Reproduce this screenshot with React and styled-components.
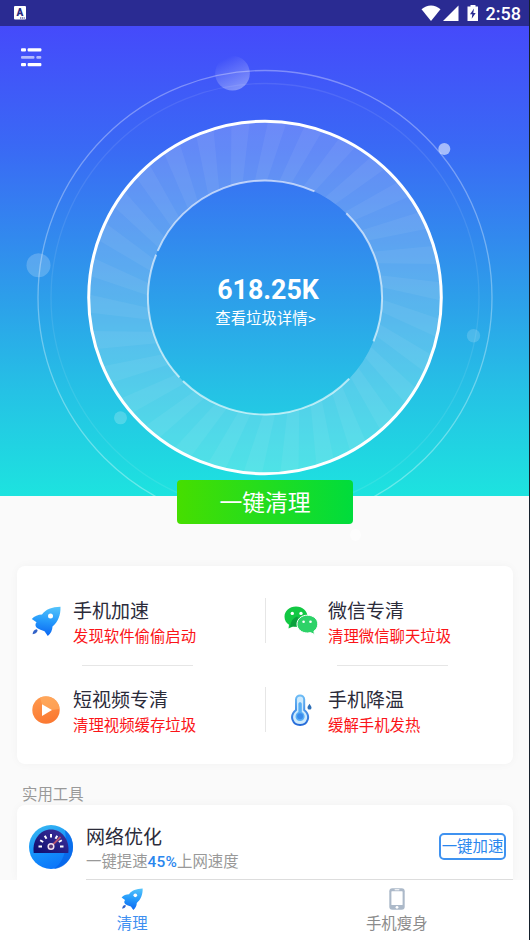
import React from 'react';
import styled, { createGlobalStyle } from 'styled-components';

const CX = 265;
const CY = 297.5;

const point = (radius, deg) => {
    const a = (deg * Math.PI) / 180;
    return `${(CX + radius * Math.sin(a)).toFixed(2)} ${(CY - radius * Math.cos(a)).toFixed(2)}`;
};

const arc = (radius, from, to) =>
    `M${point(radius, from)} A${radius} ${radius} 0 0 1 ${point(radius, to)}`;

// each ray leans a few degrees backwards towards the inner circle
const RAY_COUNT = 30;
const rays = Array.from({ length: RAY_COUNT }, (_, i) => {
    const step = 360 / RAY_COUNT;
    const a = i * step + 1;
    return `M${point(176, a)} A176 176 0 0 1 ${point(176, a + step / 2)} L${point(117, a + step / 2 - 6)} L${point(117, a - 6)}Z`;
}).join(' ');

const innerArcs = [[293.5, 385], [44, 112], [134, 224.5], [227, 291.5]];

const Dial = () => (
    <DialCanvas viewBox="0 26 530 470" width="530" height="470">
        <defs>
            <linearGradient id="bubble" x1="0.2" y1="0" x2="0.7" y2="1">
                <stop offset="0.1" stopColor="#fff" stopOpacity="0" />
                <stop offset="1" stopColor="#fff" stopOpacity="0.36" />
            </linearGradient>
        </defs>
        <circle cx={CX} cy={CY} r="227" fill="none" stroke="#fff" strokeOpacity="0.33" strokeWidth="1.3" />
        <circle cx={CX} cy={CY} r="214" fill="none" stroke="#fff" strokeOpacity="0.09" strokeWidth="1.3" />
        <circle cx="232.5" cy="73.3" r="17.3" fill="url(#bubble)" />
        <circle cx="444.3" cy="149" r="6" fill="#fff" fillOpacity="0.55" />
        <circle cx="38.5" cy="265.3" r="12" fill="#fff" fillOpacity="0.2" />
        <circle cx="473.5" cy="335.7" r="6.7" fill="#fff" fillOpacity="0.16" />
        <circle cx="120.5" cy="417.8" r="6.5" fill="#fff" fillOpacity="0.2" />
        <circle cx={CX} cy={CY} r="146.5" fill="none" stroke="#fff" strokeOpacity="0.21" strokeWidth="59" />
        <path d={rays} fill="#fff" fillOpacity="0.055" />
        <circle cx={CX} cy={CY} r="176.3" fill="none" stroke="#fff" strokeWidth="3" />
        {innerArcs.map(([from, to]) => (
            <path key={from} d={arc(117, from, to)} fill="none" stroke="#fff" strokeOpacity="0.62" strokeWidth="2" />
        ))}
    </DialCanvas>
);

const MenuIcon = () => (
    <svg width="21" height="19" viewBox="0 0 21 19" fill="#fff">
        <rect x="0" y="0.3" width="5" height="3.2" rx="1" />
        <rect x="6.6" y="0.3" width="13.8" height="3.2" rx="1" />
        <g opacity="0.6">
            <rect x="0" y="8" width="13.5" height="2.8" rx="1" />
            <rect x="15.3" y="8" width="5" height="2.8" rx="1" />
        </g>
        <rect x="0" y="15" width="5" height="3.2" rx="1" />
        <rect x="6.6" y="15" width="13.8" height="3.2" rx="1" />
    </svg>
);

const RocketIcon = ({ size }) => (
    <svg width={size} height={size} viewBox="0 0 30 30">
        <defs>
            <linearGradient id="rocket" x1="0.6" y1="0" x2="0.5" y2="1">
                <stop offset="0" stopColor="#52c2fb" />
                <stop offset="0.5" stopColor="#2499fb" />
                <stop offset="1" stopColor="#0b66f2" />
            </linearGradient>
        </defs>
        <path d="M29.500 0.800C21 1 14.500 3.500 11 8.500C7 8.500 3.500 10 0.800 13L5.500 16.300C3.800 18.500 4.300 20.500 6 22L9.500 23.800L13.500 25.300L16.800 30C19.800 27.500 21.500 24 21.500 20.500C27 16 29.800 9 29.500 0.800Z" fill="url(#rocket)" />
        <circle cx="19.500" cy="10" r="2.500" fill="#fff" />
        <path d="M5.800 23.300C3.200 23.500 1.800 25.300 1.600 28.300C4.500 28 6.300 26.300 6.600 24.300Z" fill="#3262c8" />
    </svg>
);

const WechatIcon = () => (
    <svg width="34" height="29" viewBox="0 0 34 29">
        <path d="M12 0.500C5.400 0.500 0.500 5 0.500 10.700C0.500 14.300 2.300 17 5 18.700L4.500 22.500L9 20.400C10 20.700 11 20.800 12 20.800C18.500 20.800 23.500 16.500 23.500 10.700S18.500 0.500 12 0.500Z" fill="#12c843" />
        <path d="M13 10.500C9 12 7 15 6 20.900L9 20.400L14 20.500L15 12Z" fill="#08933a" opacity="0.75" />
        <path d="M23.400 9.200C17.500 9.200 13 13 13 18.100C13 23.200 17.500 27 23.400 27C24.600 27 25.500 26.800 26.400 26.500L30.500 28.500L29.900 25.200C32.400 23.500 33.800 21 33.800 18.100C33.800 13 29.300 9.200 23.400 9.200Z" fill="#2dd268" stroke="#fff" strokeWidth="1" />
        <g fill="#fff">
            <circle cx="8.300" cy="7.400" r="1.700" />
            <circle cx="17" cy="7.400" r="1.700" />
            <circle cx="19.600" cy="15.700" r="1.300" />
            <circle cx="26.500" cy="15.700" r="1.300" />
        </g>
    </svg>
);

const PlayIcon = () => (
    <svg width="28" height="28" viewBox="0 0 28 28">
        <defs>
            <linearGradient id="play" x1="0" y1="0" x2="0.3" y2="1">
                <stop offset="0" stopColor="#ff9a4d" />
                <stop offset="1" stopColor="#fb7a33" />
            </linearGradient>
        </defs>
        <circle cx="14" cy="14" r="13.700" fill="url(#play)" />
        <path d="M8 1.600C18 -2 27 4 27.700 13L20 14L10 8.300Z" fill="#ffb366" opacity="0.6" />
        <path d="M10 8.300V20L20 14Z" fill="#fff" />
    </svg>
);

const ThermometerIcon = () => (
    <svg width="22" height="32" viewBox="0 0 22 32">
        <defs>
            <linearGradient id="thermo" x1="0" y1="0" x2="0" y2="1">
                <stop offset="0" stopColor="#6cbcf6" />
                <stop offset="1" stopColor="#2469d8" />
            </linearGradient>
        </defs>
        <path d="M6 5.500C6 0 14.200 0 14.200 5.500V16C21.500 22 17.500 31 10.100 31S-1.300 22 6 16Z" fill="#cdeafd" stroke="url(#thermo)" strokeWidth="2" />
        <path d="M8.400 10C8.400 7.500 11.800 7.500 11.800 10V18C16.500 20.500 15 27 10.100 27S3.700 20.500 8.400 18Z" fill="#58aef5" />
        <circle cx="10.100" cy="22.300" r="3" fill="#3b8cec" />
        <path d="M19.500 9.800C21 12 21.500 12.700 21.500 13.700C21.500 16.200 17.500 16.200 17.500 13.700C17.500 12.700 18.300 11.600 19.500 9.800Z" fill="#2d6fb8" />
    </svg>
);

const GaugeIcon = () => {
    const ticks = [-90, -60, -30, 0, 30, 60, 90];
    return (
        <svg width="44" height="44" viewBox="0 0 44 44">
            <defs>
                <linearGradient id="gauge" x1="0.2" y1="0" x2="0.6" y2="1">
                    <stop offset="0" stopColor="#39b8f0" />
                    <stop offset="0.5" stopColor="#1694fb" />
                    <stop offset="1" stopColor="#0b74fa" />
                </linearGradient>
                <linearGradient id="gaugeFace" x1="0" y1="1" x2="1" y2="0">
                    <stop offset="0" stopColor="#0d0c6c" />
                    <stop offset="1" stopColor="#40339f" />
                </linearGradient>
            </defs>
            <circle cx="22" cy="22" r="22" fill="url(#gauge)" />
            <path d="M36 5C42 9 44 16 44 22C44 33 36 43 25 44C33 38 39 28 36 5Z" fill="#0663e6" opacity="0.7" />
            <path d="M4.700 28C3 15 11 4.500 22 4.500S41 15 39.300 28Z" fill="url(#gaugeFace)" />
            {ticks.map((deg) => (
                <rect key={deg} x="21" y="9" width="2" height="3.500" fill="#fff" transform={`rotate(${deg} 22 21.500)`} />
            ))}
            <path d="M22 21.500L31.500 12" stroke="#b5536d" strokeWidth="1.800" />
            <circle cx="22" cy="21.500" r="2.800" fill="#573578" stroke="#f1dff0" strokeWidth="1.500" />
        </svg>
    );
};

const PhoneIcon = () => (
    <svg width="16" height="22" viewBox="0 0 16 22">
        <rect x="0.300" y="0.300" width="15.400" height="21.400" rx="3" fill="#acb9c9" />
        <rect x="2.400" y="3.200" width="11.200" height="13.800" rx="0.600" fill="#fff" />
        <rect x="5.500" y="1.300" width="5" height="0.900" rx="0.400" fill="#fff" />
        <circle cx="8" cy="19.300" r="1.400" fill="#fff" />
    </svg>
);

const StatusIcons = () => (
    <svg width="58" height="17" viewBox="0 0 58 17" fill="#fff">
        <path d="M0.500 4.300C6 -0.800 14 -0.800 19.500 4.300L10 16Z" />
        <path d="M37.500 0.500V16H22Z" />
        <path d="M49.500 0H54.500V1.500H57V16H46.500V1.500H49.500Z" />
        <path d="M53 3.500L49 9.300H51.300L50.700 13.800L54.700 8H52.300Z" fill="#2a2b92" />
    </svg>
);

const KeyboardIcon = () => (
    <svg width="12" height="14" viewBox="0 0 12 14">
        <rect width="12" height="13.500" rx="1" fill="#fff" />
        <text x="5.800" y="9.800" textAnchor="middle" fontFamily="Roboto, sans-serif" fontWeight="900" fontSize="10" fill="#29297f">A</text>
        <path d="M6 12H11" stroke="#29297f" strokeWidth="1.200" strokeDasharray="1.200 0.600" />
    </svg>
);

const Feature = ({ icon, title, desc, divider }) => (
    <FeatureCell>
        <IconSlot>{icon}</IconSlot>
        <FeatureText>
            <Title>{title}</Title>
            <Warning>{desc}</Warning>
        </FeatureText>
        {divider && <VerticalRule />}
    </FeatureCell>
);

const App = () => (
    <Screen>
        <GlobalStyle />
        <StatusBar>
            <KeyboardIcon />
            <StatusRight>
                <StatusIcons />
                <Time>2:58</Time>
            </StatusRight>
        </StatusBar>
        <Hero>
            <Dial />
            <MenuButton aria-label="menu"><MenuIcon /></MenuButton>
            <Summary>
                <Amount>618.25K</Amount>
                <Detail>查看垃圾详情&gt;</Detail>
            </Summary>
        </Hero>
        <CleanButton>一键清理</CleanButton>
        <FeatureCard>
            <Feature icon={<RocketIcon size={30} />} title="手机加速" desc="发现软件偷偷启动" divider />
            <Feature icon={<WechatIcon />} title="微信专清" desc="清理微信聊天垃圾" />
            <HorizontalRule />
            <HorizontalRule />
            <Feature icon={<PlayIcon />} title="短视频专清" desc="清理视频缓存垃圾" divider />
            <Feature icon={<ThermometerIcon />} title="手机降温" desc="缓解手机发热" />
        </FeatureCard>
        <SectionTitle>实用工具</SectionTitle>
        <ToolCard>
            <GaugeIcon />
            <ToolBody>
                <div>
                    <Title>网络优化</Title>
                    <ToolDesc>一键提速<b>45%</b>上网速度</ToolDesc>
                </div>
                <BoostButton>一键加速</BoostButton>
            </ToolBody>
        </ToolCard>
        <TabBar>
            <Tab $active><RocketIcon size={22} />清理</Tab>
            <Tab><PhoneIcon />手机瘦身</Tab>
        </TabBar>
    </Screen>
);

export default App;

const GlobalStyle = createGlobalStyle`
    * {
        box-sizing: border-box;
    }
    body {
        margin: 0;
        background: #fafafa;
        font-family: Roboto, "Noto Sans CJK SC", sans-serif;
    }
    button {
        font-family: inherit;
        padding: 0;
        border: none;
        background: none;
    }
    svg {
        display: block;
        flex: none;
    }
`;

const Screen = styled.div`
    display: flex;
    flex-direction: column;
    width: 530px;
    height: 940px;
    overflow: hidden;
    background: #fafafa;
    box-shadow: inset -1px 0 #15202c;
`;

const StatusBar = styled.header`
    display: flex;
    justify-content: space-between;
    align-items: center;
    height: 26px;
    padding: 0 8px 0 14px;
    background: #2a2b92;
    flex: none;
    margin-right: 1px;
`;

const StatusRight = styled.div`
    display: flex;
    align-items: center;
    gap: 7px;
`;

const Time = styled.span`
    color: #fff;
    font-size: 18px;
    font-weight: 500;
    line-height: 26px;
    padding-top: 2px;
`;

const Hero = styled.section`
    display: grid;
    height: 470px;
    flex: none;
    margin-right: 1px;
    overflow: hidden;
    background: linear-gradient(#454afb, #3a68f5 25%, #2d9dea 57%, #25c2e5 78%, #1de3df);

    > * {
        grid-area: 1 / 1;
    }
`;

const DialCanvas = styled.svg`
    width: 530px;
    height: 470px;
`;

const MenuButton = styled.button`
    align-self: start;
    justify-self: start;
    margin: 22px 0 0 21px;
`;

const Summary = styled.div`
    align-self: start;
    justify-self: center;
    margin-top: 248px;
    padding-left: 1px;
    color: #fff;
    text-align: center;
`;

const Amount = styled.div`
    font-size: 26.8px;
    font-weight: 700;
    line-height: 33px;
    padding-left: 5px;
`;

const Detail = styled.div`
    font-size: 15.4px;
    line-height: 24px;
`;

const CleanButton = styled.button`
    position: relative;
    align-self: center;
    flex: none;
    width: 176px;
    height: 44px;
    margin-top: -16px;
    padding-top: 4px;
    border-radius: 4px;
    background: linear-gradient(90deg, #46de00, #00dc3c);
    color: #fff;
    font-size: 22.8px;
    line-height: 40px;

    &::after {
        content: '';
        position: absolute;
        right: -8px;
        bottom: -17px;
        width: 11px;
        height: 12px;
        border-radius: 50%;
        background: #fdfdfd;
    }
`;

const Card = styled.section`
    flex: none;
    width: 496px;
    margin-left: 17px;
    border-radius: 8px;
    background: #fff;
    box-shadow: 0 0 10px rgba(0, 0, 0, 0.035);
`;

const FeatureCard = styled(Card)`
    display: grid;
    grid-template-columns: 255px 1fr;
    grid-template-rows: 45px 1px 45px;
    row-gap: 21.5px;
    height: 198px;
    margin-top: 42px;
    padding-top: 32px;
`;

const FeatureCell = styled.div`
    display: flex;
    align-items: center;
    padding-left: 12px;
`;

const IconSlot = styled.span`
    display: flex;
    justify-content: center;
    width: 34px;
    margin-right: 10px;
`;

const FeatureText = styled.div`
    padding-top: 6px;
    margin-bottom: -1px;
`;

const Title = styled.h3`
    margin: 0;
    color: #2b2b3a;
    font-size: 19px;
    font-weight: 400;
    line-height: 26px;
`;

const Warning = styled.p`
    margin: 0;
    color: #fb1418;
    font-size: 15.4px;
    line-height: 25px;
`;

const VerticalRule = styled.span`
    align-self: stretch;
    width: 1px;
    margin: 0 6px 0 auto;
    background: #e6e6e6;
`;

const HorizontalRule = styled.span`
    width: 111px;
    margin-left: 65px;
    background: #e6e6e6;
`;

const SectionTitle = styled.h2`
    flex: none;
    margin: 20px 0 -2px 22px;
    color: #999;
    font-size: 15.4px;
    font-weight: 400;
    line-height: 23px;
`;

const ToolCard = styled(Card)`
    display: flex;
    gap: 13px;
    height: 75px;
    padding-left: 12px;
    border-radius: 8px 8px 0 0;

    > svg {
        margin-top: 20px;
    }
`;

const ToolBody = styled.div`
    display: flex;
    flex: 1;
    justify-content: space-between;
    align-items: flex-start;
    padding: 20px 7px 0 0;
    border-bottom: 1px solid #ddd;
`;

const ToolDesc = styled.p`
    margin: 0;
    color: #999;
    font-size: 15.4px;
    line-height: 23px;

    b {
        color: #2b87ee;
        font-weight: 500;
        letter-spacing: 0.2px;
    }
`;

const BoostButton = styled.button`
    width: 67px;
    height: 27px;
    margin-top: 8px;
    padding-top: 2px;
    border: 2px solid #3f92f0;
    border-radius: 5px;
    color: #2b87ee;
    font-size: 15.4px;
    line-height: 21px;
    white-space: nowrap;
    display: flex;
    justify-content: center;
`;

const TabBar = styled.nav`
    display: grid;
    grid-template-columns: 1fr 1fr;
    flex: none;
    height: 60px;
    margin-right: 1px;
    background: #fff;
`;

const Tab = styled.a`
    display: flex;
    flex-direction: column;
    align-items: center;
    padding-top: 8px;
    gap: 3px;
    color: ${(props) => (props.$active ? '#3d8ff0' : '#8c8c8c')};
    font-size: 15.4px;
    line-height: 23px;
`;
